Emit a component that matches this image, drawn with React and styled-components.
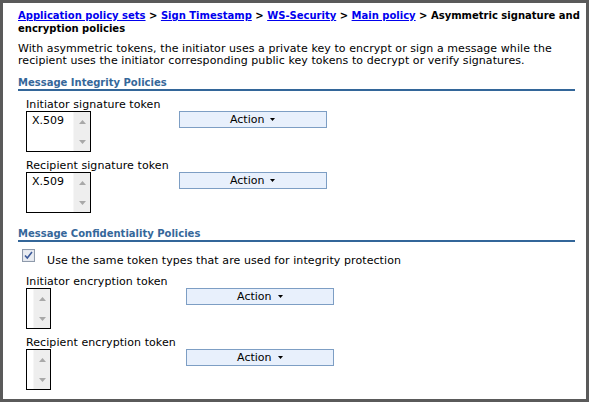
import React from 'react';
import styled, { createGlobalStyle } from 'styled-components';

const GlobalStyle = createGlobalStyle`
  html, body {
    margin: 0;
    padding: 0;
    background: #ffffff;
  }
  body {
    font-family: "DejaVu Sans", Verdana, sans-serif;
    font-size: 11px;
    color: #000;
  }
`;

const Frame = styled.div`
  width: 589px;
  height: 402px;
  box-sizing: border-box;
  border: 3px solid #5a5a5a;
  padding: 6px 11px 0 15px;
  overflow: hidden;
  background: #fff;
`;

const Breadcrumb = styled.div`
  font-weight: bold;
  font-size: 10px;
  letter-spacing: 0;
  line-height: 13px;
  margin-right: -8px;
`;

const Crumb = styled.a`
  color: #0000ee;
  text-decoration: underline;
`;

const Description = styled.p`
  margin: 8px 0 0 0;
  line-height: 12px;
  letter-spacing: 0.07px;
`;

const SectionTitle = styled.h3`
  margin: ${p => p.$top}px 0 0 0;
  font-size: 10px;
  line-height: 12px;
  font-weight: bold;
  color: #35679a;
  border-bottom: 2px solid #336699;
  padding-bottom: 0;
`;

const TokenGrid = styled.div`
  display: grid;
  grid-template-columns: max-content 148px;
  column-gap: 10px;
  padding-left: 8px;
  margin-top: ${p => p.$top}px;
`;

const TokenLabel = styled.div`
  grid-column: 1;
  line-height: 10px;
  letter-spacing: 0.08px;
  margin-top: ${p => (p.$first ? 0 : 9)}px;
`;

const ListBox = styled.div`
  grid-column: 1;
  width: ${p => p.$width}px;
  height: 41px;
  box-sizing: border-box;
  border: 1px solid #000;
  display: flex;
  justify-content: space-between;
  margin-top: 1px;
  background: #fff;
`;

const ListItem = styled.div`
  padding: 3px 0 0 5px;
  line-height: 12px;
`;

const ScrollBar = styled.div`
  width: 17px;
  background: #eeeeee;
  border-left: 1px solid #f6f6f6;
  display: flex;
  flex-direction: column;
  justify-content: space-between;
  align-items: center;
  padding: 8px 0 7px;
  box-sizing: border-box;
`;

const ActionButton = styled.button`
  grid-column: 2;
  align-self: start;
  margin-top: ${p => p.$offset}px;
  height: 17px;
  width: 148px;
  box-sizing: border-box;
  background: #e8f0fc;
  border: 1px solid #7d9ec4;
  font-family: "DejaVu Sans", Verdana, sans-serif;
  font-size: 11px;
  color: #000;
  display: flex;
  align-items: center;
  justify-content: center;
  gap: 6px;
  padding: 0;
`;

const CheckRow = styled.div`
  display: flex;
  align-items: flex-start;
  gap: 12px;
  margin-top: 7px;
  padding-left: 4px;
  line-height: 13px;
  letter-spacing: 0.08px;
`;

const CheckText = styled.span`
  padding-top: 5px;
`;

const Arrow = ({ up }) => (
  <svg width="7" height="4" viewBox="0 0 7 4">
    <path d={up ? 'M0 4 L3.5 0 L7 4 Z' : 'M0 0 L3.5 4 L7 0 Z'} fill="#a8a8a8" />
  </svg>
);

const Caret = () => (
  <svg width="5" height="3" viewBox="0 0 5 3">
    <path d="M0 0 L5 0 L2.5 3 Z" fill="#000" />
  </svg>
);

const CheckBox = () => (
  <svg width="13" height="13" viewBox="0 0 13 13">
    <rect x="0.5" y="0.5" width="12" height="12" fill="#dfe3ea" stroke="#8e9aab" />
    <rect x="1.5" y="1.5" width="10" height="10" fill="#e9ecf1" />
    <path d="M3 6.5 L5.3 9 L10 3" fill="none" stroke="#3d5a9a" strokeWidth="1.6" />
  </svg>
);

const TokenList = ({ item, width }) => (
  <ListBox $width={width}>
    <ListItem>{item}</ListItem>
    <ScrollBar>
      <Arrow up />
      <Arrow />
    </ScrollBar>
  </ListBox>
);

const TokenRow = ({ label, item, width, first, offset }) => (
  <>
    <TokenLabel $first={first}>{label}</TokenLabel>
    <div />
    <TokenList item={item} width={width} />
    <ActionButton $offset={offset}>
      Action <Caret />
    </ActionButton>
  </>
);

export default function App() {
  return (
    <>
      <GlobalStyle />
      <Frame>
        <Breadcrumb>
          <Crumb>Application policy sets</Crumb> &gt; <Crumb>Sign Timestamp</Crumb> &gt;{' '}
          <Crumb>WS-Security</Crumb> &gt; <Crumb>Main policy</Crumb> &gt; Asymmetric signature and
          encryption policies
        </Breadcrumb>
        <Description>
          With asymmetric tokens, the initiator uses a private key to encrypt or sign a message while the
          recipient uses the initiator corresponding public key tokens to decrypt or verify signatures.
        </Description>

        <SectionTitle $top={10}>Message Integrity Policies</SectionTitle>
        <TokenGrid $top={9}>
          <TokenRow first label="Initiator signature token" item="X.509" width={65} offset={1} />
          <TokenRow label="Recipient signature token" item="X.509" width={65} offset={1} />
        </TokenGrid>

        <SectionTitle $top={15}>Message Confidentiality Policies</SectionTitle>
        <CheckRow>
          <CheckBox />
          <CheckText>Use the same token types that are used for integrity protection</CheckText>
        </CheckRow>
        <TokenGrid $top={10}>
          <TokenRow first label="Initiator encryption token" width={25} offset={1} />
          <TokenRow label="Recipient encryption token" width={25} offset={1} />
        </TokenGrid>
      </Frame>
    </>
  );
}
